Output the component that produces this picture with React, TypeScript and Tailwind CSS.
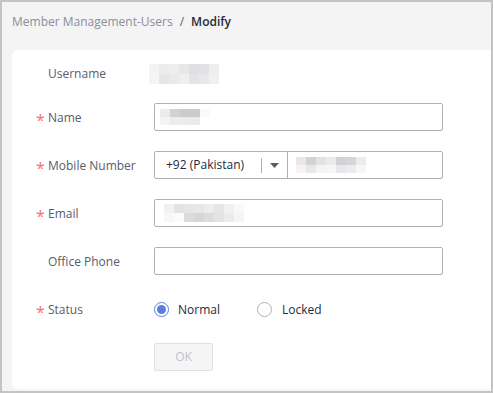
import React from "react";

// pixelated placeholder standing in for masked personal data
function Blur({ rows, cw, ch }: { rows: string[][]; cw: number; ch: number }) {
  return (
    <div className="flex flex-col">
      {rows.map((row, i) => (
        <div key={i} className="flex">
          {row.map((c, j) => (
            <div key={j} style={{ width: cw, height: ch, background: c }} />
          ))}
        </div>
      ))}
    </div>
  );
}

function Label({ text, required }: { text: string; required?: boolean }) {
  return (
    <div className="flex items-center w-[118px] shrink-0 text-[#575d6c] pt-[1px]">
      <span className="w-[12px] text-[#f66f6a] text-[16px] leading-none pt-[5px]">{required ? "*" : ""}</span>
      <span>{text}</span>
    </div>
  );
}

const usernameBlur = [
  ["#f3f3f3", "#ececec", "#eeeeee", "#e9e6e8", "#e0e0e2", "#e2e2e4", "#eeeeef"],
  ["#f5f5f5", "#e6e6e6", "#eaeaea", "#efeef0", "#e4e4e6", "#e8e8ea", "#f0f0f2"],
];
const nameBlur = [
  ["#ecebeb", "#d0d3d6", "#cacbcc", "#cbcbcd", "#fafafa"],
  ["#f3f3f3", "#ebeced", "#ececec", "#e9eaea", "#ffffff"],
];
const mobileBlur = [
  ["#ece6e8", "#d3d3d6", "#e2e2e4", "#eaeaec", "#d2d2d4", "#d6d6d8", "#ececef"],
  ["#f6f3f4", "#e8e8ea", "#f4f4f6", "#f6f6f7", "#e8e8ea", "#ececee", "#f6f6f8"],
];
const emailBlur = [
  ["#f1f1f1", "#e3e3e4", "#e6e6e7", "#e7e7e8", "#ececed", "#e5e5e6", "#f1f1f2", "#f8f8fb"],
  ["#f7f7f7", "#fbfbfb", "#dcdbdd", "#d7d5d8", "#dddcdd", "#e3e3e4", "#ebebeb", "#f4f5f8"],
];

export default function App() {
  return (
    <div
      className="w-[493px] h-[393px] border-2 border-[#c4c4c4] bg-[#f4f4f4] overflow-hidden flex flex-col text-[12px]"
      style={{ fontFamily: '"Open Sans", "Noto Sans", sans-serif' }}
    >
      {/* breadcrumb */}
      <div className="h-[48px] pl-[10px] pt-[11px] flex items-start">
        <span className="text-[#8a8e99]">Member Management-Users</span>
        <span className="text-[#575d6c] mx-[7px]">/</span>
        <span className="text-[#252b3a] font-semibold">Modify</span>
      </div>

      <div className="ml-[10px] mr-[-4px] h-[339px] bg-white rounded-l-[6px] pl-[24px] pt-[9px] flex flex-col gap-[20px]">
        <div className="flex items-center h-[28px] -mb-[4px]">
          <Label text="Username" />
          <div className="-ml-[5px] mt-[1px]">
            <Blur rows={usernameBlur} cw={10} ch={10} />
          </div>
        </div>

        <div className="flex items-center h-[28px]">
          <Label text="Name" required />
          <div className="w-[289px] h-[28px] border border-[#adb0b8] rounded-[2px] flex items-center pl-[5px]">
            <Blur rows={nameBlur} cw={10} ch={8} />
          </div>
        </div>

        <div className="flex items-center h-[28px]">
          <Label text="Mobile Number" required />
          <div className="w-[289px] h-[28px] border border-[#adb0b8] rounded-[2px] flex items-center">
            <div className="w-[133px] h-full flex items-center pl-[11px] border-r border-[#adb0b8] text-[#252b3a]">
              <span>+92 (Pakistan)</span>
              <span className="ml-[17px] w-px h-[15px] bg-[#adb0b8]" />
              <svg width="9" height="5" viewBox="0 0 9 5" className="ml-[8px]">
                <path d="M0 0 H9 L4.5 5 Z" fill="#575d6c" />
              </svg>
            </div>
            <div className="pl-[8px]">
              <Blur rows={mobileBlur} cw={10} ch={8} />
            </div>
          </div>
        </div>

        <div className="flex items-center h-[28px]">
          <Label text="Email" required />
          <div className="w-[289px] h-[28px] border border-[#adb0b8] rounded-[2px] flex items-center pl-[9px]">
            <Blur rows={emailBlur} cw={10} ch={9} />
          </div>
        </div>

        <div className="flex items-center h-[28px]">
          <Label text="Office Phone" />
          <div className="w-[289px] h-[28px] border border-[#adb0b8] rounded-[2px]" />
        </div>

        <div className="flex items-center h-[28px]">
          <Label text="Status" required />
          <div className="flex items-center text-[#252b3a]">
            <span className="w-[15px] h-[15px] rounded-full border border-[#5e7ce0] flex items-center justify-center">
              <span className="w-[9px] h-[9px] rounded-full bg-[#5e7ce0]" />
            </span>
            <span className="ml-[9px] w-[41px] pt-[1px]">Normal</span>
            <span className="ml-[38px] w-[15px] h-[15px] rounded-full border border-[#adb0b8]" />
            <span className="ml-[10px] pt-[1px]">Locked</span>
          </div>
        </div>

        <div className="flex h-[28px]">
          <div className="w-[118px] shrink-0" />
          <button
            type="button"
            disabled
            className="w-[59px] h-[28px] border border-[#dfe1e6] bg-[#f5f5f6] rounded-[2px] text-[#c0c2c8]"
          >
            OK
          </button>
        </div>
      </div>
    </div>
  );
}
